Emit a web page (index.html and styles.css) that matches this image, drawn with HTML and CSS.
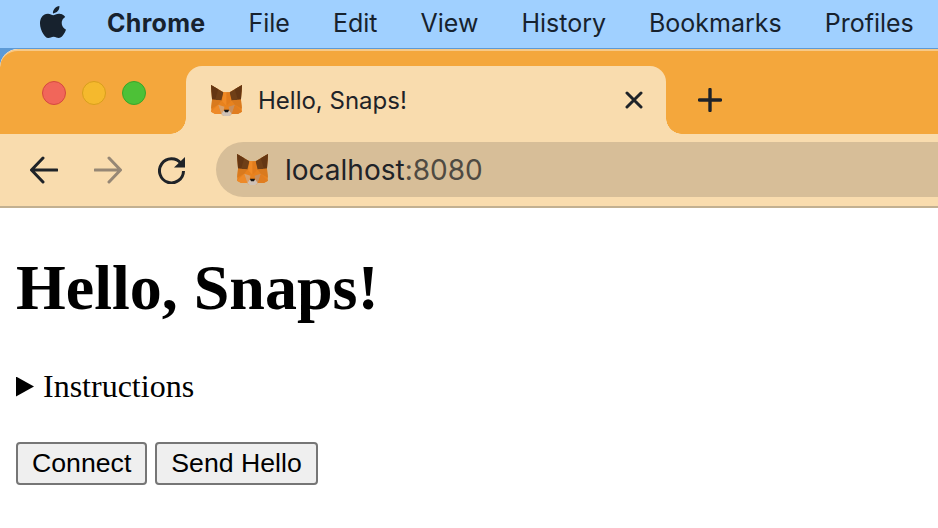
FILE: index.html
```html
<!DOCTYPE html>
<html lang="en">
<head>
<meta charset="utf-8">
<title>Hello, Snaps!</title>
<link rel="stylesheet" href="styles.css">
</head>
<body>
<svg class="defs" aria-hidden="true">
  <symbol id="fox" viewBox="0 0 32 32">
    <polygon points="1,1 13,8 19,8 31,1 30,15 31,27 27,29 21,29 19,31 13,31 11,29 5,29 1,27 2,15" fill="#e8821e"/>
    <polygon points="1,1 13,8 11,16 2,15" fill="#6f3f17"/>
    <polygon points="31,1 19,8 21,16 30,15" fill="#6f3f17"/>
    <polygon points="1,1 8,5 5,15 2,15" fill="#643613"/>
    <polygon points="31,1 24,5 27,15 30,15" fill="#643613"/>
    <polygon points="13,8 16,8 16,21 12,17" fill="#f08a26"/>
    <polygon points="19,8 16,8 16,21 20,17" fill="#e27c1c"/>
    <polygon points="2,15 11,16 8,20 1,24" fill="#d97a1e"/>
    <polygon points="30,15 21,16 24,20 31,24" fill="#d97a1e"/>
    <polygon points="1,27 8,20 11,29 5,29" fill="#ee8a28"/>
    <polygon points="31,27 24,20 21,29 27,29" fill="#e07d20"/>
    <polygon points="8,20 14,22 13,26 11,29" fill="#d9a06a"/>
    <polygon points="24,20 18,22 19,26 21,29" fill="#c98f5c"/>
    <polygon points="11,29 13,26 19,26 21,29 19,31 13,31" fill="#cfc2b6"/>
    <polygon points="13.5,25 18.5,25 17.5,27.5 14.5,27.5" fill="#161616"/>
  </symbol>
</svg>
<header class="menubar">
  <svg class="apple" viewBox="0 0 24 24"><path d="M12.152 6.896c-.948 0-2.415-1.078-3.96-1.04-2.04.027-3.91 1.183-4.961 3.014-2.117 3.675-.546 9.103 1.519 12.09 1.013 1.454 2.208 3.09 3.792 3.039 1.52-.065 2.09-.987 3.935-.987 1.831 0 2.35.987 3.96.948 1.637-.026 2.676-1.48 3.676-2.948 1.156-1.688 1.636-3.325 1.662-3.415-.039-.013-3.182-1.221-3.22-4.857-.026-3.04 2.48-4.494 2.597-4.559-1.429-2.09-3.623-2.324-4.39-2.376-2-.156-3.675 1.09-4.61 1.09zM15.53 3.83c.843-1.012 1.4-2.427 1.245-3.83-1.207.052-2.662.805-3.532 1.818-.78.896-1.454 2.338-1.273 3.714 1.338.104 2.715-.688 3.559-1.701"/></svg>
  <nav class="menu">
    <span class="menu-app">Chrome</span>
    <span>File</span>
    <span>Edit</span>
    <span>View</span>
    <span>History</span>
    <span>Bookmarks</span>
    <span>Profiles</span>
  </nav>
</header>
<div class="desktop">
  <div class="window">
    <div class="tabstrip">
      <div class="lights">
        <span class="light light-red"></span>
        <span class="light light-yellow"></span>
        <span class="light light-green"></span>
      </div>
      <div class="tab">
        <svg class="fox"><use href="#fox"/></svg>
        <span class="tab-title">Hello, Snaps!</span>
        <svg class="tab-close" viewBox="0 0 18 18"><path d="M2 2 16 16M16 2 2 16"/></svg>
      </div>
      <svg class="new-tab" viewBox="0 0 24 24"><path d="M12 1.5V22.5M1.5 12H22.5"/></svg>
    </div>
    <div class="toolbar">
      <svg class="nav-icon" viewBox="0 0 28 28"><path d="M27 14H2M13 2 1.5 14 13 26"/></svg>
      <svg class="nav-icon nav-icon-off" viewBox="0 0 28 28"><path d="M1 14H26M15 2 26.5 14 15 26"/></svg>
      <svg class="nav-icon nav-reload" viewBox="0 0 28 28"><path d="M23 7.5A12 12 0 1 0 25.5 15"/><polygon class="reload-head" points="27,1 27,11.5 16,11.5"/></svg>
      <div class="omnibox">
        <svg class="fox"><use href="#fox"/></svg>
        <span class="url">localhost<span class="url-port">:8080</span></span>
      </div>
    </div>
    <main class="page">
      <h1>Hello, Snaps!</h1>
      <details>
        <summary>Instructions</summary>
      </details>
      <div class="actions">
        <button type="button">Connect</button>
        <button type="button">Send Hello</button>
      </div>
    </main>
  </div>
</div>
</body>
</html>
```
FILE: styles.css
```css
* { box-sizing: border-box; }
html, body { margin: 0; height: 100%; overflow: hidden; background: #fff; }
body { display: flex; flex-direction: column; }
.defs { display: none; }

.menubar {
  height: 48px;
  background: #a0d0ff;
  display: flex;
  align-items: center;
  padding: 0 0 2px 37px;
  color: #17222e;
  font: 25px/1 "Inter", sans-serif;
  flex: none;
}
.apple { width: 32px; height: 32px; fill: #17222e; flex: none; margin-top: -2px; }
.menu { display: flex; gap: 43px; margin-left: 38px; white-space: nowrap; }
.menu-app { font-weight: 700; letter-spacing: .3px; }

.desktop { flex: 1; background: #5d9ad6; min-height: 0; }
.window {
  height: 100%;
  background: #fff;
  border-top-left-radius: 18px;
  overflow: hidden;
  display: flex;
  flex-direction: column;
  margin-top: 1px;
}

.tabstrip {
  height: 85px;
  background: #f4a73c;
  border-top: 2px solid #f7c987;
  border-top-left-radius: 18px;
  display: flex;
  align-items: flex-end;
  flex: none;
}
.lights { display: flex; gap: 16px; width: 186px; padding: 0 0 29px 42px; }
.light { width: 24px; height: 24px; border-radius: 50%; border: 1px solid; }
.light-red { background: #f1665a; border-color: #d5493f; }
.light-yellow { background: #f5b92d; border-color: #d89f1c; }
.light-green { background: #4dc137; border-color: #3ba529; }

.tab {
  position: relative;
  width: 480px;
  height: 68px;
  background: #f9dcae;
  border-radius: 16px 16px 0 0;
  display: flex;
  align-items: center;
  padding: 0 23px 0 24px;
  color: #1f2328;
}
.tab::before, .tab::after {
  content: "";
  position: absolute;
  bottom: 0;
  width: 16px;
  height: 16px;
}
.tab::before { left: -16px; background: radial-gradient(circle at 0 0, transparent 15.5px, #f9dcae 16px); }
.tab::after { right: -16px; background: radial-gradient(circle at 100% 0, transparent 15.5px, #f9dcae 16px); }
.fox { width: 33px; height: 33px; flex: none; }
.tab-title { font: 24px/1 "Inter", sans-serif; margin-left: 15px; flex: 1; padding-top: 1px; }
.tab-close { width: 18px; height: 18px; fill: none; stroke: #1f2328; stroke-width: 3; stroke-linecap: round; }
.new-tab { width: 24px; height: 24px; margin: 0 0 22px 32px; fill: none; stroke: #1f2328; stroke-width: 3.4; stroke-linecap: round; }

.toolbar {
  height: 74px;
  background: #f9dcae;
  border-bottom: 2px solid #c2b091;
  display: flex;
  align-items: center;
  padding: 0 0 1px 30px;
  flex: none;
}
.nav-icon { width: 28px; height: 28px; margin-right: 36px; fill: none; stroke: #1f2328; stroke-width: 3; stroke-linecap: round; stroke-linejoin: round; flex: none; }
.nav-icon-off { stroke: #968775; }
.nav-reload { margin-right: 30px; stroke-linecap: butt; }
.reload-head { fill: #1f2328; stroke: none; }
.omnibox {
  flex: 1;
  height: 55px;
  background: #d7be98;
  border-radius: 28px 0 0 28px;
  display: flex;
  align-items: center;
  padding-left: 20px;
}
.url { font: 28px/1 "Inter", sans-serif; margin-left: 16px; color: #1f2328; }
.url-port { color: #4f4a42; }

.page { flex: 1; padding: 0 16px; color: #000; font-family: "Liberation Serif", serif; }
h1 { margin: 43px 0 0; font-size: 64px; line-height: 74px; font-weight: 700; }
details { margin-top: 43px; font-size: 32px; line-height: 37px; }
summary { cursor: pointer; list-style: none; display: flex; align-items: center; gap: 9px; }
summary::-webkit-details-marker { display: none; }
summary::before {
  content: "";
  width: 18px;
  height: 20px;
  background: #000;
  clip-path: polygon(0 0, 100% 50%, 0 100%);
  flex: none;
}
.actions { display: flex; gap: 8px; margin-top: 37px; }
button {
  height: 43px;
  padding: 0 14px;
  font: 26.67px/1 "Liberation Sans", sans-serif;
  color: #000;
  background: #efefef;
  border: 2px solid #767676;
  border-radius: 4px;
}
```
